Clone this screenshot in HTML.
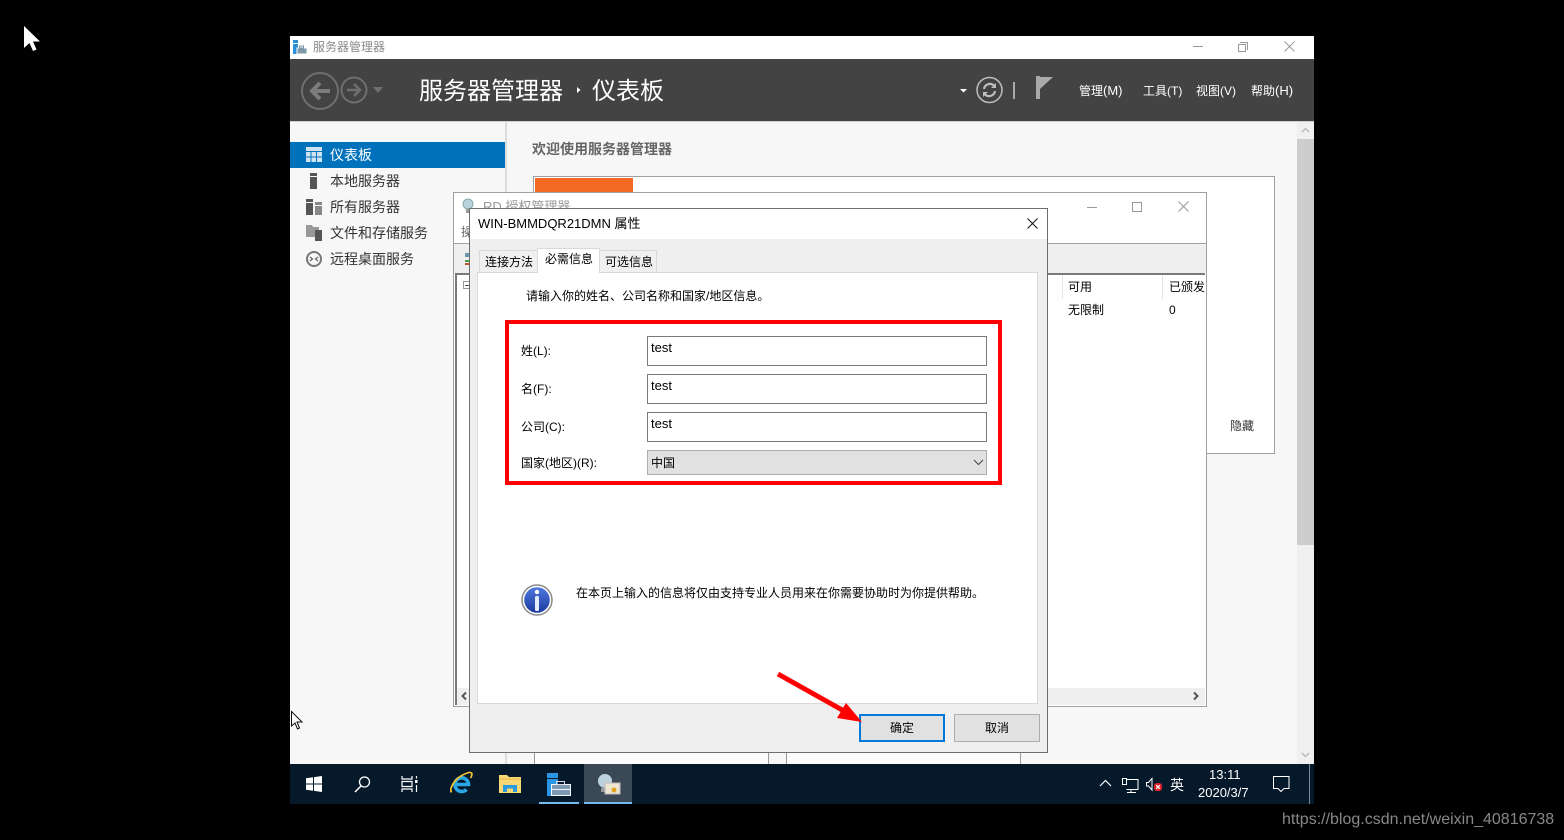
<!DOCTYPE html>
<html lang="zh-CN">
<head>
<meta charset="utf-8">
<title>服务器管理器</title>
<style>
html,body{margin:0;padding:0;width:1564px;height:840px;overflow:hidden;background:#000}
body{position:relative;font-family:"Liberation Sans","Noto Sans CJK SC",sans-serif;font-size:12px;color:#000}
.a{position:absolute;box-sizing:border-box}
.t{position:absolute;white-space:nowrap;line-height:16px;height:16px}
svg{position:absolute;overflow:visible}
</style>
</head>
<body>

<!-- main window -->
<div class="a" style="left:290px;top:36px;width:1024px;height:23px;background:#fff"></div>
<svg style="left:293px;top:40px" width="14" height="14" viewBox="0 0 14 14"><rect x="0" y="0" width="5" height="3" fill="#2b8fd8"/><rect x="0" y="4" width="5" height="10" fill="#2b8fd8"/><rect x="4" y="8" width="10" height="6" fill="#7f98a8" stroke="#fff" stroke-width="1"/><rect x="6.500" y="6" width="4" height="2" fill="none" stroke="#7f98a8"/></svg>
<div class="t" style="left:313px;top:39px;color:#8a8a8a">服务器管理器</div>
<div class="a" style="left:1193px;top:46px;width:10px;height:1px;background:#999"></div>
<div class="a" style="left:1238px;top:44px;width:8px;height:8px;border:1px solid #999;background:#fff"></div>
<div class="a" style="left:1240px;top:42px;width:8px;height:8px;border:1px solid #999;border-left:0;border-bottom:0"></div>
<svg style="left:1284px;top:41px" width="11" height="11"><path d="M0.5 .5L10.5 10.5M10.5 .5L.5 10.500" stroke="#999" fill="none"/></svg>

<div class="a" style="left:290px;top:59px;width:1024px;height:62px;background:#434343"></div>
<svg style="left:300px;top:70px" width="90" height="40" viewBox="0 0 90 40" fill="none"><circle cx="20" cy="21" r="18" stroke="#6f6f6f" stroke-width="2"/><path d="M30 21H12M20 13l-8 8 8 8" stroke="#7c7c7c" stroke-width="4"/><circle cx="54" cy="20" r="12.500" stroke="#6f6f6f" stroke-width="2"/><path d="M47 20H60M54 14l6 6-6 6" stroke="#6f6f6f" stroke-width="2.500"/><path d="M73 17h10l-5 6z" fill="#6f6f6f"/></svg>
<div class="t" style="left:419px;top:75px;height:34px;line-height:34px;font-size:24px;color:#fff">服务器管理器</div>
<svg style="left:577px;top:87px" width="4" height="6"><path d="M0 0l3.500 3L0 6z" fill="#fff"/></svg>
<div class="t" style="left:592px;top:75px;height:34px;line-height:34px;font-size:24px;color:#fff">仪表板</div>
<svg style="left:959px;top:77px" width="96" height="26" viewBox="0 0 96 26" fill="none"><path d="M1 12h7l-3.500 3.500z" fill="#fff"/><circle cx="30.500" cy="13" r="12.500" stroke="#bdbdbd" stroke-width="1.500"/><path d="M25 12a6 6 0 0 1 10-3.500M36 14a6 6 0 0 1-10 3.500" stroke="#bdbdbd" stroke-width="2.200"/><path d="M37 6v5h-5zM24 20v-5h5z" fill="#bdbdbd"/><rect x="54" y="5" width="2" height="17" fill="#aaa"/><rect x="77" y="-1" width="4" height="23" fill="#a8a8a8"/><path d="M81 0h13L81 12z" fill="#aaa"/></svg>
<div class="t" style="left:1079px;top:83px;color:#fff">管理<span style="font-size:13px">(M)</span></div>
<div class="t" style="left:1143px;top:83px;color:#fff">工具(T)</div>
<div class="t" style="left:1196px;top:83px;color:#fff">视图(V)</div>
<div class="t" style="left:1251px;top:83px;color:#fff">帮助<span style="font-size:13px">(H)</span></div>

<div class="a" style="left:290px;top:121px;width:1024px;height:643px;background:#f7f7f7;border-top:1px solid #cfcfcf"></div>
<div class="a" style="left:505px;top:122px;width:2px;height:642px;background:#dcdcdc"></div>

<!-- sidebar -->
<div class="a" style="left:290px;top:142px;width:215px;height:26px;background:#0072bc"></div>
<svg style="left:306px;top:147px" width="16" height="16"><rect width="16" height="4" fill="#cfe3f2"/><path d="M0 5h4.500v4.500H0zM5.500 5h4.500v4.500H5.500zM11 5h5v4.500h-5zM0 10.500h4.500V15H0zM5.500 10.500h4.500V15H5.500zM11 10.500h5V15h-5z" fill="#cfe3f2"/></svg>
<div class="t" style="left:330px;top:147px;font-size:14px;color:#fff">仪表板</div>
<svg style="left:310px;top:173px" width="8" height="16"><rect width="7" height="3" fill="#555"/><rect y="4" width="7" height="12" fill="#555"/></svg>
<div class="t" style="left:330px;top:173px;font-size:14px;color:#333">本地服务器</div>
<svg style="left:306px;top:199px" width="16" height="16"><rect width="7" height="3" fill="#555"/><rect y="4" width="7" height="12" fill="#555"/><rect x="9" width="7" height="3" fill="#888" y="3"/><rect x="9" y="7" width="7" height="9" fill="#888"/></svg>
<div class="t" style="left:330px;top:199px;font-size:14px;color:#333">所有服务器</div>
<svg style="left:306px;top:225px" width="16" height="16"><path d="M0 0h6l1 2h6v10H0z" fill="#999"/><rect x="9" y="5" width="7" height="11" fill="#555"/></svg>
<div class="t" style="left:330px;top:225px;font-size:14px;color:#333">文件和存储服务</div>
<svg style="left:306px;top:251px" width="16" height="16" fill="none"><circle cx="8" cy="8" r="7" stroke="#777" stroke-width="2"/><path d="M4 6l2.500 2L4 10M12 6L9.500 8l2.500 2" stroke="#666" stroke-width="1.200"/></svg>
<div class="t" style="left:330px;top:251px;font-size:14px;color:#333">远程桌面服务</div>

<!-- dashboard content -->
<div class="t" style="left:532px;top:141px;font-size:14px;font-weight:bold;color:#666">欢迎使用服务器管理器</div>
<div class="a" style="left:533px;top:176px;width:742px;height:278px;background:#fff;border:1px solid #a0a0a0"></div>
<div class="a" style="left:535px;top:178px;width:98px;height:20px;background:#f26a24"></div>
<div class="t" style="left:1230px;top:418px;color:#333">隐藏</div>
<div class="a" style="left:534px;top:740px;width:1px;height:24px;background:#999"></div>
<div class="a" style="left:768px;top:740px;width:1px;height:24px;background:#999"></div>
<div class="a" style="left:786px;top:740px;width:1px;height:24px;background:#999"></div>
<div class="a" style="left:1020px;top:740px;width:1px;height:24px;background:#999"></div>
<div class="a" style="left:535px;top:740px;width:233px;height:24px;background:#fcfcfc"></div>
<div class="a" style="left:787px;top:740px;width:233px;height:24px;background:#fcfcfc"></div>

<!-- scrollbar -->
<div class="a" style="left:1297px;top:122px;width:17px;height:642px;background:#f0f0f0"></div>
<div class="a" style="left:1297px;top:139px;width:17px;height:406px;background:#cdcdcd"></div>
<svg style="left:1301px;top:127px" width="9" height="6"><path d="M1 5l3.500-3.500L8 5" stroke="#bbb" stroke-width="1.500" fill="none"/></svg>
<svg style="left:1301px;top:752px" width="9" height="6"><path d="M1 1l3.500 3.500L8 1" stroke="#bbb" stroke-width="1.500" fill="none"/></svg>

<!-- back window: RD licensing manager -->
<div class="a" style="left:453px;top:192px;width:754px;height:515px;background:#fff;border:1px solid #a0a0a0"></div>
<svg style="left:462px;top:198px" width="16" height="16"><circle cx="6" cy="6" r="5" fill="#b9d3dc" stroke="#8aa"/><rect x="4" y="11" width="4" height="4" fill="#999"/></svg>
<div class="t" style="left:483px;top:199px;font-size:13px;color:#999">RD 授权管理器</div>
<div class="a" style="left:1087px;top:207px;width:10px;height:1px;background:#999"></div>
<div class="a" style="left:1132px;top:202px;width:10px;height:10px;border:1px solid #999"></div>
<svg style="left:1178px;top:201px" width="11" height="11"><path d="M.5 .5L10.500 10.500M10.500 .5L.5 10.500" stroke="#999" fill="none"/></svg>
<div class="t" style="left:461px;top:224px;color:#666">操作</div>
<div class="a" style="left:454px;top:243px;width:752px;height:1px;background:#a0a0a0"></div>
<div class="a" style="left:454px;top:244px;width:752px;height:29px;background:#efefef"></div>
<div class="a" style="left:455px;top:273px;width:750px;height:2px;background:#7a7a7a"></div>
<svg style="left:465px;top:252px" width="8" height="14"><rect y="1" width="6" height="4" fill="#6a9ab0"/><rect y="8" width="6" height="2" fill="#4a9a4a"/><rect y="11" width="6" height="2" fill="#c05030"/></svg>
<div class="a" style="left:455px;top:274px;width:2px;height:431px;background:#7a7a7a"></div>
<div class="a" style="left:463px;top:281px;width:8px;height:8px;border:1px solid #999"></div>
<div class="a" style="left:465px;top:285px;width:4px;height:1px;background:#456"></div>
<div class="a" style="left:1062px;top:275px;width:1px;height:24px;background:#e5e5e5"></div>
<div class="a" style="left:1162px;top:275px;width:1px;height:24px;background:#e5e5e5"></div>
<div class="t" style="left:1068px;top:279px">可用</div>
<div class="a" style="left:1169px;top:279px;width:36px;height:16px;overflow:hidden"><div class="t" style="left:0;top:0">已颁发</div></div>
<div class="t" style="left:1068px;top:302px">无限制</div>
<div class="t" style="left:1169px;top:302px">0</div>
<div class="a" style="left:457px;top:688px;width:748px;height:17px;background:#efefef"></div>
<svg style="left:461px;top:692px" width="6" height="8"><path d="M5 .5L1.500 4 5 7.500" stroke="#555" stroke-width="2" fill="none"/></svg>
<svg style="left:1193px;top:692px" width="6" height="8"><path d="M1 .5L4.500 4 1 7.500" stroke="#555" stroke-width="2" fill="none"/></svg>

<!-- dialog -->
<div class="a" style="left:469px;top:208px;width:579px;height:545px;background:#efefef;border:1px solid #6e6e6e"></div>
<div class="a" style="left:470px;top:209px;width:577px;height:30px;background:#fff"></div>
<div class="t" style="left:478px;top:216px;font-size:13px">WIN-BMMDQR21DMN 属性</div>
<svg style="left:1027px;top:218px" width="11" height="11"><path d="M.5 .5L10.500 10.500M10.500 .5L.5 10.500" stroke="#111" fill="none"/></svg>

<div class="a" style="left:479px;top:250px;width:59px;height:23px;background:#f0f0f0;border:1px solid #d9d9d9"></div>
<div class="a" style="left:599px;top:250px;width:58px;height:23px;background:#f0f0f0;border:1px solid #d9d9d9"></div>
<div class="a" style="left:477px;top:272px;width:561px;height:432px;background:#fff;border:1px solid #d9d9d9"></div>
<div class="a" style="left:537px;top:248px;width:63px;height:25px;background:#fff;border:1px solid #d9d9d9;border-bottom:0"></div>
<div class="t" style="left:485px;top:254px">连接方法</div>
<div class="t" style="left:545px;top:251px">必需信息</div>
<div class="t" style="left:605px;top:254px">可选信息</div>

<div class="t" style="left:526px;top:288px">请输入你的姓名、公司名称和国家/地区信息。</div>

<div class="a" style="left:505px;top:320px;width:497px;height:165px;border:4px solid #f00"></div>
<div class="t" style="left:521px;top:343px">姓(L):</div>
<div class="t" style="left:521px;top:381px">名(F):</div>
<div class="t" style="left:521px;top:419px">公司(C):</div>
<div class="t" style="left:521px;top:455px">国家(地区)(R):</div>

<div class="a" style="left:647px;top:336px;width:340px;height:30px;background:#fff;border:1px solid #7a7a7a"></div>
<div class="a" style="left:647px;top:374px;width:340px;height:30px;background:#fff;border:1px solid #7a7a7a"></div>
<div class="a" style="left:647px;top:412px;width:340px;height:30px;background:#fff;border:1px solid #7a7a7a"></div>
<div class="a" style="left:647px;top:450px;width:340px;height:25px;background:#e1e1e1;border:1px solid #adadad"></div>
<div class="t" style="left:651px;top:340px;font-size:13px">test</div>
<div class="t" style="left:651px;top:378px;font-size:13px">test</div>
<div class="t" style="left:651px;top:416px;font-size:13px">test</div>
<div class="t" style="left:651px;top:455px">中国</div>
<svg style="left:973px;top:459px" width="11" height="7"><path d="M1 1l4.500 4.500L10 1" stroke="#444" fill="none"/></svg>

<svg style="left:521px;top:584px" width="32" height="32" viewBox="0 0 32 32"><defs><linearGradient id="g" x1="0" y1="0" x2="0" y2="1"><stop offset="0" stop-color="#4f78e0"/><stop offset="1" stop-color="#1c3a9c"/></linearGradient></defs><circle cx="16" cy="16" r="15" fill="#fff" stroke="#8a8a8a" stroke-width="1.500"/><circle cx="16" cy="16" r="12.800" fill="url(#g)"/><circle cx="16" cy="8" r="2.200" fill="#fff"/><rect x="14" y="12" width="4" height="15" rx="1.500" fill="#e6ecfa"/></svg>
<div class="t" style="left:576px;top:585px">在本页上输入的信息将仅由支持专业人员用来在你需要协助时为你提供帮助。</div>

<div class="a" style="left:859px;top:714px;width:86px;height:28px;background:#e1e1e1;border:2px solid #0078d7"></div>
<div class="t" style="left:890px;top:720px">确定</div>
<div class="a" style="left:954px;top:714px;width:86px;height:28px;background:#e1e1e1;border:1px solid #adadad"></div>
<div class="t" style="left:985px;top:720px">取消</div>

<!-- red arrow -->
<svg style="left:0;top:0" width="1564" height="840"><path d="M778 674L844 711" stroke="#f00" stroke-width="5" fill="none"/><path d="M846 703L837 718 862 722z" fill="#f00"/></svg>

<!-- taskbar -->
<div class="a" style="left:290px;top:764px;width:1024px;height:40px;background:#06192b"></div>
<svg style="left:306px;top:776px" width="16" height="16"><path d="M0 2.300L7 1.300V7.500H0zM8 1.100L16 0V7.500H8zM0 8.500H7V14.700L0 13.700zM8 8.500H16V16L8 14.900z" fill="#fff"/></svg>
<svg style="left:354px;top:776px" width="17" height="17" fill="none"><circle cx="10.500" cy="6" r="5" stroke="#fff" stroke-width="1.300"/><path d="M7 10L1 16" stroke="#fff" stroke-width="1.500"/></svg>
<svg style="left:401px;top:776px" width="18" height="16" fill="none" stroke="#fff" stroke-width="1.200"><path d="M1 0v3h10V0M1 16v-3h10v3M1 5.500h10v5H1z"/><rect x="14" y="4" width="2.500" height="3" fill="#fff" stroke="none"/><path d="M15.500 0v2.500M15.500 9v7"/></svg>
<svg style="left:450px;top:772px" width="22" height="22" fill="none"><path d="M6 12.500h12.500a6.800 6.800 0 1 0-2 5" stroke="#2aa8e6" stroke-width="3.600"/><path d="M1.500 20.500C-1 17 4 8 11 4c4-2.500 9-4.500 10.500-3 1 1 0 3.500-1 5" stroke="#f2c230" stroke-width="1.700"/></svg>
<svg style="left:499px;top:775px" width="22" height="18"><path d="M0 0h8l2 2h12v16H0z" fill="#f8d775"/><path d="M0 3.500h22v1H0z" fill="#e8b93e"/><rect x="4" y="10" width="14" height="7" fill="#2a9be0"/><rect x="8" y="13.500" width="6" height="4.500" fill="#f8d775"/></svg>
<svg style="left:547px;top:773px" width="25" height="23"><rect x="0" y="0" width="11" height="5" fill="#2b95e6"/><rect x="0" y="6" width="11" height="17" fill="#2b95e6"/><rect x="4.500" y="11.500" width="19" height="11" fill="#7d9bb0" stroke="#f4f8fa" stroke-width="1"/><rect x="9.500" y="8.500" width="8" height="3" fill="none" stroke="#dde" stroke-width="1"/><rect x="5" y="16" width="18" height="1" fill="#eef"/></svg>
<div class="a" style="left:539px;top:802px;width:40px;height:2px;background:#76b9ed"></div>
<div class="a" style="left:584px;top:764px;width:48px;height:40px;background:#3b4855"></div>
<div class="a" style="left:584px;top:802px;width:48px;height:2px;background:#76b9ed"></div>
<svg style="left:597px;top:773px" width="24" height="24"><circle cx="8" cy="8" r="7" fill="#bcd2dc"/><rect x="4" y="15" width="5" height="4" fill="#999"/><rect x="8" y="10" width="15" height="11" fill="#efe6d2" stroke="#bbb"/><circle cx="17" cy="17" r="2.500" fill="#e0a020"/></svg>

<svg style="left:1099px;top:779px" width="13" height="8"><path d="M1 7l5.500-5.500L12 7" stroke="#fff" stroke-width="1.200" fill="none"/></svg>
<svg style="left:1122px;top:778px" width="17" height="15" fill="none" stroke="#fff" stroke-width="1"><path d="M5 1.500H16v10H4.500M.5 .5h4v6h-4zM9 11.500v2.500M5 14.500h9"/></svg>
<svg style="left:1146px;top:778px" width="18" height="16"><path d="M.5 4.500H2.500L6 .5V12L2.500 8H.5z" fill="none" stroke="#fff"/><rect x="8" y="5" width="8" height="8" rx="3" fill="#e0202a"/><path d="M10.200 7.200l3.600 3.600M13.800 7.200l-3.600 3.600" stroke="#fff" stroke-width="1.200"/></svg>
<div class="t" style="left:1170px;top:777px;font-size:14px;color:#fff">英</div>
<div class="t" style="left:1209px;top:767px;font-size:13px;color:#fff">13:11</div>
<div class="t" style="left:1198px;top:785px;font-size:13px;color:#fff">2020/3/7</div>
<svg style="left:1273px;top:776px" width="17" height="17" fill="none"><path d="M.5 .5h15.500v12h-5l-3 3-3-3H.5z" stroke="#fff" stroke-width="1"/></svg>
<div class="a" style="left:1309px;top:764px;width:1px;height:40px;background:#7a8794"></div>

<!-- cursors -->
<svg style="left:24px;top:26px" width="17" height="25"><path d="M0 0V22L5.500 17 9 25 12.500 23.500 9 15.500H16z" fill="#fff"/></svg>
<svg style="left:291px;top:711px" width="12" height="20"><path d="M.5 .5V15L4 12l2.500 6 2-1L6 11h5z" fill="#fff" stroke="#111" stroke-width="1"/></svg>

<div class="t" style="left:1282px;top:812px;font-size:16px;color:#888">https://blog.csdn.net/weixin_40816738</div>

</body>
</html>
